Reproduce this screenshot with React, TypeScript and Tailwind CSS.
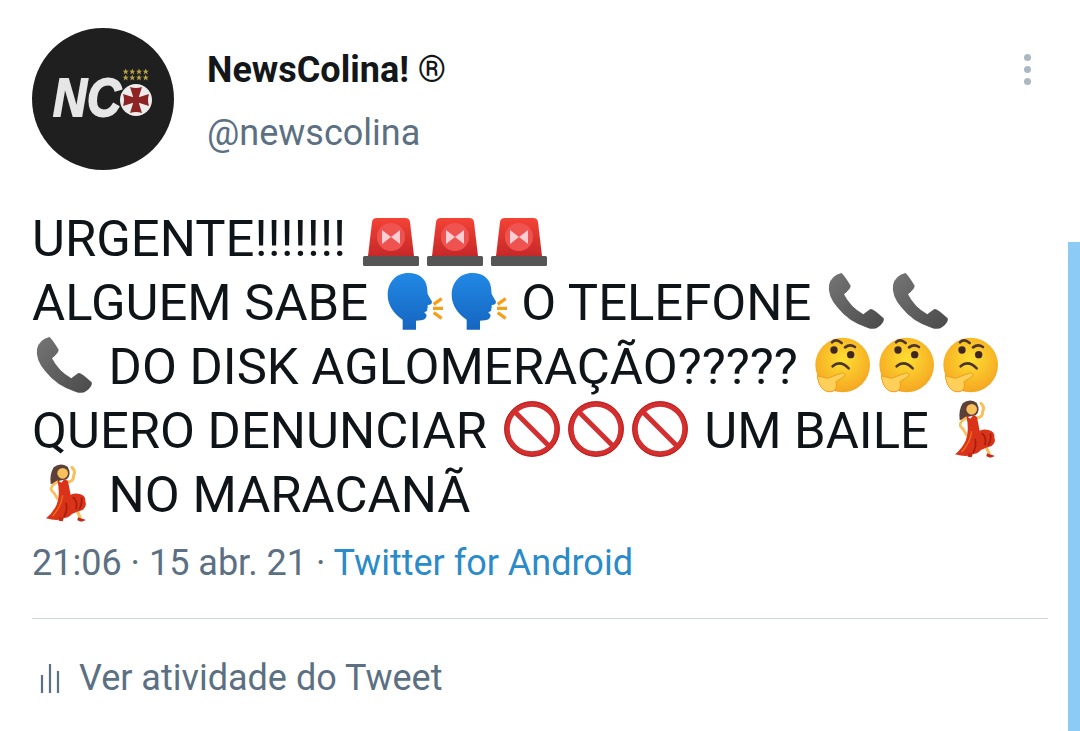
const emojiClass = 'inline-block w-[64px] h-[64px] -my-[6px] align-[-6px] overflow-visible';

function Siren() {
  return (
    <svg viewBox="0 0 64 64" className={emojiClass}>
      <defs>
        <linearGradient id="sirenDome" x1="0" y1="0" x2="0" y2="1">
          <stop offset="0" stopColor="#f44336" />
          <stop offset="1" stopColor="#c62828" />
        </linearGradient>
      </defs>
      <path d="M13 18 Q13.500 14 18 14 L46 14 Q50.500 14 51 18 L55 52 L9 52 Z" fill="url(#sirenDome)" />
      <rect x="4" y="52" width="56" height="10" rx="1.500" fill="#555555" />
      <circle cx="32" cy="33" r="14" fill="#ef5350" />
      <path d="M23 26 L32 33 L23 40 Z M41 26 L32 33 L41 40 Z" fill="#ffcdd2" />
    </svg>
  );
}

function SpeakingHead() {
  return (
    <svg viewBox="0 0 64 64" className={emojiClass}>
      <defs>
        <linearGradient id="headFill" x1="0" y1="0" x2="0" y2="1">
          <stop offset="0" stopColor="#2189e5" />
          <stop offset="1" stopColor="#1565c0" />
        </linearGradient>
      </defs>
      <g transform="translate(-10 1) scale(.3333)">
        <path
          d="M95 182 L95 152 C70 135 50 110 50 78 C50 40 75 12 112 12 C145 12 165 30 168 55 L170 75 L183 98 Q184 106 170 108 L170 118 L168 126 L160 130 L167 138 Q166 152 150 154 L135 155 L135 182 Z"
          fill="url(#headFill)"
        />
        <path d="M188 106 L212 89 M186 118 L216 118 M188 131 L212 148" fill="none" stroke="#f59f1b" strokeWidth="10" />
        <path d="M166 119 L182 113 L182 120 Z" fill="#ffffff" />
      </g>
    </svg>
  );
}

function Phone() {
  return (
    <svg viewBox="0 0 64 64" className={emojiClass}>
      <defs>
        <linearGradient id="phoneFill" x1="0" y1="0" x2="1" y2="1">
          <stop offset="0" stopColor="#757575" />
          <stop offset="1" stopColor="#4a4a4a" />
        </linearGradient>
      </defs>
      <g transform="translate(-15 1) scale(.3333)">
        <path
          d="M97 12 Q104 16 125 50 Q126 58 105 76 Q125 115 163 136 Q170 130 184 120 Q192 118 224 148 Q228 160 208 174 Q195 184 175 176 Q120 160 85 115 Q55 80 60 48 Q66 20 97 12 Z"
          fill="url(#phoneFill)"
        />
      </g>
    </svg>
  );
}

function Thinking() {
  return (
    <svg viewBox="0 0 64 64" className={emojiClass}>
      <defs>
        <radialGradient id="faceFill" cx="0.5" cy="0.4" r="0.6">
          <stop offset="0" stopColor="#fde030" />
          <stop offset="1" stopColor="#f5a623" />
        </radialGradient>
      </defs>
      <g transform="translate(0 -63) scale(.3333)">
        <circle cx="98" cy="288" r="82" fill="url(#faceFill)" />
        <path d="M66 220 Q78 208 95 222" fill="none" stroke="#4e342e" strokeWidth="8" strokeLinecap="round" />
        <path d="M105 235 Q120 224 135 234" fill="none" stroke="#4e342e" strokeWidth="8" strokeLinecap="round" />
        <circle cx="72" cy="243" r="11" fill="#3e2723" />
        <circle cx="122" cy="257" r="11" fill="#3e2723" />
        <path d="M68 292 Q90 272 116 298" fill="none" stroke="#4e342e" strokeWidth="8" strokeLinecap="round" />
        <path
          d="M22 320 Q40 325 52 328 L95 312 Q108 312 104 322 L78 338 Q84 362 66 368 Q40 372 28 345 Q22 330 22 320 Z"
          fill="#fdd05a"
          stroke="#f09a1a"
          strokeWidth="3"
        />
      </g>
    </svg>
  );
}

function NoEntry() {
  return (
    <svg viewBox="0 0 64 64" className={emojiClass}>
      <circle cx="32" cy="33" r="25" fill="#ffffff" stroke="#d32f2f" strokeWidth="5.500" />
      <circle cx="32" cy="33" r="27.300" fill="none" stroke="#b71c1c" strokeWidth="1" />
      <path d="M14.500 15.500 L49.500 50.500" stroke="#d32f2f" strokeWidth="5" />
    </svg>
  );
}

function Dancer({ x }: { x: number }) {
  return (
    <svg viewBox="0 0 64 64" className={emojiClass}>
      <g transform={`translate(${x} -2) scale(.3333)`}>
        <path d="M95 28 Q115 12 137 26 Q150 50 134 64 L112 68 Q104 78 86 78 Q82 50 95 28 Z" fill="#5d4037" />
        <circle cx="122" cy="46" r="16" fill="#f6c05c" />
        <path d="M134 72 Q156 72 155 52 Q162 40 150 28" fill="none" stroke="#f6c05c" strokeWidth="9" strokeLinecap="round" />
        <path d="M106 72 Q84 84 88 96 Q100 108 106 122" fill="none" stroke="#f6c05c" strokeWidth="8" strokeLinecap="round" />
        <path d="M160 150 L176 180" fill="none" stroke="#f6c05c" strokeWidth="9" />
        <path
          d="M106 66 L118 74 L128 62 L138 70 Q142 90 146 110 Q160 104 172 108 Q192 112 190 130 Q196 145 182 156 Q165 160 150 168 Q140 180 125 180 Q110 192 72 181 Q92 165 104 140 Q116 110 106 66 Z"
          fill="#d9341a"
        />
        <path d="M152 118 Q168 128 162 154 M178 118 Q182 135 172 154 M132 135 Q138 155 126 177" fill="none" stroke="#a81c0c" strokeWidth="5" />
        <path d="M122 112 Q118 145 92 174" fill="none" stroke="#f0701a" strokeWidth="4" />
        <path d="M168 178 L192 186 L178 191 L166 187 Z M110 178 L126 178 L122 190 L110 188 Z" fill="#c62814" />
      </g>
    </svg>
  );
}

function Avatar() {
  const starPath = 'M0 -3.200 L0.900 -1 L3.100 -1 L1.300 0.400 L2 2.700 L0 1.300 L-2 2.700 L-1.300 0.400 L-3.100 -1 L-0.900 -1 Z';
  return (
    <svg viewBox="0 0 142 142" className="w-[142px] h-[142px] shrink-0">
      <circle cx="71" cy="71" r="71" fill="#1f1f1f" />
      <text
        x="21"
        y="88"
        fontFamily="Liberation Sans"
        fontSize="53"
        fontWeight="700"
        fontStyle="italic"
        textLength="68"
        lengthAdjust="spacingAndGlyphs"
        fill="#e6e6e6"
        stroke="#e6e6e6"
        strokeWidth="1.800"
      >
        NC
      </text>
      <circle cx="104" cy="72" r="16" fill="#ececec" />
      <rect x="101" y="69" width="6" height="6" fill="#8e2323" />
      {[0, 90, 180, 270].map((r) => (
        <path key={r} d="M101.500 70 L98 59 Q104 61 110 59 L106.500 70 Z" fill="#8e2323" transform={`rotate(${r} 104 72)`} />
      ))}
      {[43.7, 49.7].map((y) =>
        [93.7, 100.3, 107, 113.7].map((x) => (
          <path key={`${x}-${y}`} d={starPath} transform={`translate(${x} ${y})`} fill="#b5a24a" />
        )),
      )}
    </svg>
  );
}

export default function App() {
  return (
    <div
      className="relative w-[1080px] h-[731px] overflow-hidden bg-white text-[#14171a]"
      style={{ fontFamily: 'Roboto, sans-serif' }}
    >
      <div className="absolute right-0 top-[242px] bottom-0 w-[12px] bg-[#8ccbf5]" />

      <div className="flex flex-col px-[32px] pt-[28px]">
        <div className="flex items-start">
          <Avatar />
          <div className="flex-1 pl-[33px] pt-[19px]">
            <div className="text-[36px] leading-[46px] font-bold">
              NewsColina! <span className="font-normal">®</span>
            </div>
            <div className="mt-[17px] text-[36px] leading-[46px] text-[#5b7083]">@newscolina</div>
          </div>
          <div className="flex flex-col gap-[5px] pt-[26px] pr-[17px]">
            <span className="w-[7px] h-[7px] rounded-full bg-[#aab8c2]" />
            <span className="w-[7px] h-[7px] rounded-full bg-[#aab8c2]" />
            <span className="w-[7px] h-[7px] rounded-full bg-[#aab8c2]" />
          </div>
        </div>

        <div className="mt-[37px] text-[50.8px] leading-[64px] whitespace-pre text-[#0f1419]">
          <div>
            URGENTE!!!!!!! <Siren /><Siren /><Siren />
          </div>
          <div>
            ALGUEM SABE <SpeakingHead /><SpeakingHead /> O TELEFONE <Phone /><Phone />
          </div>
          <div>
            <Phone /> DO DISK AGLOMERAÇÃO????? <Thinking /><Thinking /><Thinking />
          </div>
          <div>
            QUERO DENUNCIAR <NoEntry /><NoEntry /><NoEntry /> UM BAILE <Dancer x={-11} />
          </div>
          <div>
            <Dancer x={-10} /> NO MARACANÃ
          </div>
        </div>

        <div className="mt-[13px] text-[36px] leading-[46px] text-[#5b7083]">
          21:06 · 15 abr. 21 · <span className="text-[#2a8bc9]">Twitter for Android</span>
        </div>

        <div className="mt-[32px] h-px bg-[#ccd6dd]" />

        <div className="mt-[36px] flex items-end">
          <svg viewBox="0 0 20 30" className="w-[20px] h-[30px] mr-[19px] ml-[8px]">
            <path d="M2 12 V30 M10 1 V30 M18 8 V30" stroke="#5b7083" strokeWidth="2.200" fill="none" />
          </svg>
          <span className="text-[36px] leading-[46px] text-[#5b7083] -mb-[8px]">Ver atividade do Tweet</span>
        </div>
      </div>
    </div>
  );
}
